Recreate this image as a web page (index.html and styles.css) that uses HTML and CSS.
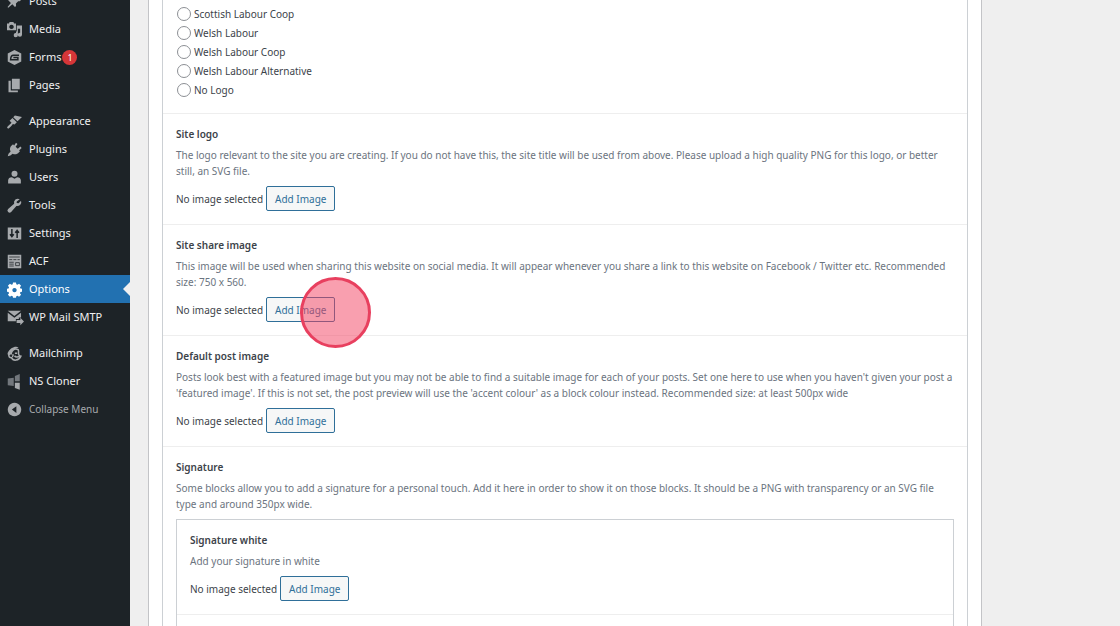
FILE: index.html
```
<!DOCTYPE html>
<html lang="en">
<head>
<meta charset="utf-8">
<title>Options</title>
<link rel="stylesheet" href="styles.css">
</head>
<body>
<div class="admin">
  <nav class="menu" aria-label="Main menu">
    <ul class="menu-list">
      <li><a class="menu-item" href="#"><svg class="icon" viewBox="0 0 20 20"><path d="M10.400 3l1-1.500 7 7-1.500 1-2 0-3 3.200.2 3.300-1.500 1.300-3.500-3.500-5.500 4.400-.8-.8 4.400-5.500-3.600-3.500 1.300-1.500 3.400.3 3.200-3z"/></svg><span>Posts</span></a></li>
      <li><a class="menu-item" href="#"><svg class="icon" viewBox="0 0 20 20"><path fill-rule="evenodd" d="M0 2h2.500l1-2h5l1 2H12v9H0zM6 3.500a3 3 0 1 0 .01 0z"/><path d="M13 4.500h7v12.500a2.800 2.800 0 1 1-2.500-2.800V9h-3v8.500a2.800 2.800 0 1 1-2.500-2.800V12.500h1z"/></svg><span>Media</span></a></li>
      <li><a class="menu-item" href="#"><svg class="icon" viewBox="0 0 20 20"><path d="M10 0l9 4.800v10.400L10 20l-9-4.800V4.800z"/><path class="cut" d="M16 7H8.500Q5 7 4.800 13H14.500V10H8.500"/></svg><span>Forms</span><span class="count">1</span></a></li>
      <li><a class="menu-item" href="#"><svg class="icon" viewBox="0 0 20 20"><path d="M6.500 1H17v14H6.500z"/><path d="M2 3.500h3v13h9.500V19H2z"/></svg><span>Pages</span></a></li>
      <li class="group-start"><a class="menu-item" href="#"><svg class="icon" viewBox="0 0 20 20"><path d="M10.500 2l9.500 2-6 5.800L8.300 4.200zM7.300 5.200l5.800 5.800-3 3-2.300-.6C6.500 15 4 18.800 1.500 19.500L0 18c.8-2.500 5-5 6-6.500L3.500 9z"/></svg><span>Appearance</span></a></li>
      <li><a class="menu-item" href="#"><svg class="icon" viewBox="0 0 20 20"><path d="M12 1l2 1.500-2.500 3.700 2.800 2.800L18 6l1.500 2-3.300 3.200 1 1.300-1.200 1c-2.500 3-5.500 3.500-8.500 2L4.500 18 1 19l1-3.500 2.800-3C3 9.500 4 6 7 4L8 3l1.500 1.500z"/></svg><span>Plugins</span></a></li>
      <li><a class="menu-item" href="#"><svg class="icon" viewBox="0 0 20 20"><circle cx="10" cy="5" r="4"/><path d="M1.500 18v-4c0-3 2-4.500 5-4.500l3.500 2 3.500-2c3 0 5 1.500 5 4.500v4z"/></svg><span>Users</span></a></li>
      <li><a class="menu-item" href="#"><svg class="icon" viewBox="0 0 20 20"><path d="M17 1.500a5.300 5.300 0 0 0-7.500 6.200L1.500 14.500a2.800 2.800 0 0 0 4 4l7-8a5.300 5.300 0 0 0 6.200-7L15.500 7l-2.600-.2L13 4.500z"/></svg><span>Tools</span></a></li>
      <li><a class="menu-item" href="#"><svg class="icon" viewBox="0 0 20 20"><path d="M1 2h18v16H1z"/><path class="cut" d="M6.500 4v11M4 11l2.500 3L9 11M13.500 16V5M11 9l2.500-3L16 9"/></svg><span>Settings</span></a></li>
      <li><a class="menu-item" href="#"><svg class="icon" viewBox="0 0 20 20"><path d="M1 1h18v18H1z"/><path class="cut thin" d="M3 4h14M3 7.500h4M8.500 7.500h4M14 7.500h3M3 11h6M3 13.500h6M3 16h6M11.500 11.500h5v4h-5z"/></svg><span>ACF</span></a></li>
      <li><a class="menu-item current" href="#" aria-current="page"><svg class="icon" viewBox="0 0 20 20"><path fill-rule="evenodd" d="M8 .5h4l.4 2.600 1.500.6 2.200-1.500 2.700 2.700-1.500 2.200.6 1.500 2.100.4v4l-2.100.4-.6 1.500 1.500 2.200-2.700 2.700-2.200-1.500-1.500.6-.4 2.100H8l-.4-2.100-1.500-.6-2.200 1.500-2.700-2.700 1.500-2.200-.6-1.500L0 13V9l2.100-.4.6-1.500-1.500-2.200 2.700-2.700 2.200 1.500 1.500-.6zM10 8a2.900 2.900 0 1 0 .01 0z"/></svg><span>Options</span></a></li>
      <li><a class="menu-item" href="#"><svg class="icon wide" viewBox="0 0 23 20"><path d="M1 1h18L10 8z"/><path d="M1 3.500l9 7 9-7V10h-3v2h-4v3H1z"/><path d="M13 13.500h5V10.500l5 5-5 5v-3h-5z"/></svg><span>WP Mail SMTP</span></a></li>
      <li class="group-start"><a class="menu-item" href="#"><svg class="icon" viewBox="0 0 20 20"><path d="M15.500 2C12-1 4 2 1 9c-.8 2 .5 3.500 2 3.500C5.500 9 7 4.500 15.500 2z"/><path class="ring" d="M15 5c-5-2.500-9 1-9.500 5.500C3 10 1.500 12 3 14.500c1 1 2 1.200 3 1C8 20.500 16 20 18.500 13.500c-2 0-2.500-1-3-2.500C15 9 16 7 15 5zM7.500 11c1.500 2 0 3-1 3M10 13c1.500 2.500 5 2 6.500.5M10.500 9.500h3"/></svg><span>Mailchimp</span></a></li>
      <li><a class="menu-item" href="#"><svg class="icon" viewBox="0 0 20 20"><g class="dim"><path d="M1 6l8-1v11l-8-1zM10.500 2.500L17 0v9.500h-6.500z"/></g><path d="M10.500 11.500H17V21l-6.500-2.500z"/></svg><span>NS Cloner</span></a></li>
      <li><button class="menu-item collapse" type="button"><svg class="icon" viewBox="0 0 20 20"><path fill-rule="evenodd" d="M10 1a9 9 0 1 0 .01 0zM12.500 5.500v9L6.500 10z"/></svg><span>Collapse Menu</span></button></li>
    </ul>
  </nav>
  <main class="content">
    <div class="panel">
      <form class="fields">
        <fieldset class="radios">
          <label class="radio"><input type="radio" name="logo">Scottish Labour Coop</label>
          <label class="radio"><input type="radio" name="logo">Welsh Labour</label>
          <label class="radio"><input type="radio" name="logo">Welsh Labour Coop</label>
          <label class="radio"><input type="radio" name="logo">Welsh Labour Alternative</label>
          <label class="radio"><input type="radio" name="logo">No Logo</label>
        </fieldset>
        <section class="field">
          <h2 class="title">Site logo</h2>
          <p class="description">The logo relevant to the site you are creating. If you do not have this, the site title will be used from above. Please upload a high quality PNG for this logo, or better still, an SVG file.</p>
          <div class="picker"><span>No image selected</span><button class="add" type="button">Add Image</button></div>
        </section>
        <section class="field">
          <h2 class="title">Site share image</h2>
          <p class="description">This image will be used when sharing this website on social media. It will appear whenever you share a link to this website on Facebook / Twitter etc. Recommended size: 750 x 560.</p>
          <div class="picker"><span>No image selected</span><span class="marked"><button class="add" type="button">Add Image</button><span class="marker"></span></span></div>
        </section>
        <section class="field">
          <h2 class="title">Default post image</h2>
          <p class="description">Posts look best with a featured image but you may not be able to find a suitable image for each of your posts. Set one here to use when you haven't given your post a 'featured image'. If this is not set, the post preview will use the 'accent colour' as a block colour instead. Recommended size: at least 500px wide</p>
          <div class="picker"><span>No image selected</span><button class="add" type="button">Add Image</button></div>
        </section>
        <section class="field">
          <h2 class="title">Signature</h2>
          <p class="description">Some blocks allow you to add a signature for a personal touch. Add it here in order to show it on those blocks. It should be a PNG with transparency or an SVG file type and around 350px wide.</p>
          <div class="subfields">
            <section class="field">
              <h3 class="title">Signature white</h3>
              <p class="description">Add your signature in white</p>
              <div class="picker"><span>No image selected</span><button class="add" type="button">Add Image</button></div>
            </section>
            <section class="field"></section>
          </div>
        </section>
      </form>
    </div>
  </main>
</div>
</body>
</html>
```
FILE: styles.css
```
* { box-sizing: border-box; }

body {
  margin: 0;
  background: #efefef;
  color: #3c434a;
  font: 10px/16px "Noto Sans", "Open Sans", sans-serif;
}

.admin {
  display: grid;
  grid-template-columns: 130px 1fr;
  height: 100vh;
  overflow: hidden;
}

.menu { background: #1d2327; }

.menu-list {
  list-style: none;
  margin: -13px 0 0;
  padding: 0;
  font-size: 11px;
}

.group-start { margin-top: 8px; }

.menu-item {
  position: relative;
  display: flex;
  align-items: center;
  gap: 7px;
  width: 100%;
  height: 28px;
  padding: 0 0 0 7px;
  border: 0;
  background: none;
  color: #f0f0f1;
  font: inherit;
  text-decoration: none;
  white-space: nowrap;
}

.collapse {
  color: #a7aaad;
  font-size: 10px;
}

.current {
  background: #2271b1;
  color: #fff;
}

.current::after {
  content: "";
  position: absolute;
  right: 0;
  border: 7px solid transparent;
  border-left: 0;
  border-right-color: #efefef;
}

.icon {
  flex: none;
  width: 15px;
  height: 15px;
  overflow: visible;
  fill: #a7aaad;
}

.wide { width: 17px; margin-right: -2px; }
.current .icon { fill: #fff; }
.cut { fill: none; stroke: #1d2327; stroke-width: 2; }
.thin { stroke-width: 1; }
.ring { fill: none; stroke: #a7aaad; stroke-width: 2; }
.dim { fill: #72777c; }

.count {
  width: 15px;
  height: 15px;
  margin-left: -6px;
  border-radius: 50%;
  background: #d63638;
  color: #fff;
  font-size: 9px;
  line-height: 15px;
  text-align: center;
}

.content { padding: 0 138px 0 18px; }

.panel {
  padding: 0 13px;
  border: solid #c3c4c7;
  border-width: 0 1px;
  background: #fff;
}

.fields {
  border: solid #ccd0d4;
  border-width: 0 1px;
}

.radios {
  display: grid;
  margin: 0;
  padding: 4px 13px 14px;
  border: 0;
}

.radio {
  display: flex;
  align-items: center;
  gap: 3px;
  height: 19px;
}

.radio input {
  appearance: none;
  width: 14px;
  height: 14px;
  margin: 0 0 0 1px;
  border: 1px solid #8c8f94;
  border-radius: 50%;
  background: #fff;
}

.field {
  padding: 13px;
  border-top: 1px solid #eee;
}

.title {
  margin: 0 0 5px;
  font-size: 10px;
  font-weight: 600;
  line-height: 15px;
}

.description {
  margin: 0 0 7px;
  color: #6b7480;
}

.picker {
  display: flex;
  align-items: center;
  gap: 3px;
}

.add {
  height: 25px;
  padding: 0 8px;
  border: 1px solid #2f6f99;
  border-radius: 2px;
  background: #f6f7f7;
  color: #2f6f99;
  font: inherit;
}

.marked {
  position: relative;
  display: flex;
}

.marker {
  position: absolute;
  top: -20px;
  right: -36px;
  width: 71px;
  height: 71px;
  border: 3px solid #e8405f;
  border-radius: 50%;
  background: rgba(243, 64, 96, 0.5);
  pointer-events: none;
}

.subfields {
  border: 1px solid #ccd0d4;
}

.subfields .field:first-child { border-top: 0; }
```
